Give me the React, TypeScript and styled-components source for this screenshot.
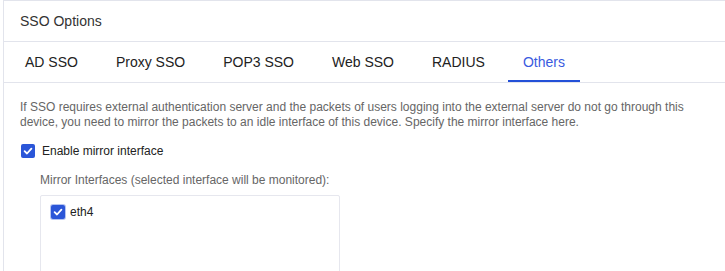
import styled, { createGlobalStyle } from 'styled-components'

const GlobalStyle = createGlobalStyle`
  html, body {
    margin: 0;
    padding: 0;
    background: #fff;
    overflow: hidden;
  }
  body {
    font-family: "Liberation Sans", Arial, sans-serif;
  }
`

const tabs = ['AD SSO', 'Proxy SSO', 'POP3 SSO', 'Web SSO', 'RADIUS', 'Others']

const Check = ({ focused }: { focused?: boolean }) => (
  <Box $focused={focused}>
    <svg width="10" height="10" viewBox="0 0 10 10">
      <path d="M1.6 5.2 L4 7.5 L8.4 2.6" fill="none" stroke="#fff" strokeWidth="1.8" strokeLinecap="round" strokeLinejoin="round" />
    </svg>
  </Box>
)

export default function App() {
  return (
    <>
      <GlobalStyle />
      <Panel>
        <Header>SSO Options</Header>
        <TabBar>
          {tabs.map((t) => (
            <Tab key={t} $active={t === 'Others'}>{t}</Tab>
          ))}
        </TabBar>
        <Content>
          <Description>
            If SSO requires external authentication server and the packets of users logging into the external server do not go through this
            device, you need to mirror the packets to an idle interface of this device. Specify the mirror interface here.
          </Description>
          <CheckRow>
            <Check />
            <CheckLabel>Enable mirror interface</CheckLabel>
          </CheckRow>
          <SubSection>
            <SubLabel>Mirror Interfaces (selected interface will be monitored):</SubLabel>
            <ListBox>
              <ListItem>
                <Check focused />
                <ItemLabel>eth4</ItemLabel>
              </ListItem>
            </ListBox>
          </SubSection>
        </Content>
      </Panel>
    </>
  )
}

const Panel = styled.div`
  margin-left: 3px;
  border: 1px solid #e2e4ec;
  border-right: none;
  border-bottom: none;
  height: 270px;
  overflow: hidden;
`

const Header = styled.div`
  height: 40px;
  display: flex;
  align-items: center;
  padding-left: 16px;
  font-size: 14px;
  color: #333;
  border-bottom: 1px solid #e2e4ec;
`

const TabBar = styled.div`
  display: flex;
  gap: 8px;
  height: 40px;
  padding-left: 6px;
  border-bottom: 1px solid #e2e4ec;
`

const Tab = styled.div<{ $active?: boolean }>`
  display: flex;
  align-items: center;
  padding: 0 15px;
  font-size: 14px;
  color: ${(p) => (p.$active ? '#3a5be0' : '#222')};
  box-shadow: ${(p) => (p.$active ? 'inset 0 -2px 0 #2350d8' : 'none')};
`

const Content = styled.div`
  padding: 17px 16px 0;
`

const Description = styled.p`
  margin: 0;
  font-size: 12px;
  line-height: 15px;
  color: #666;
`

const CheckRow = styled.div`
  display: flex;
  align-items: center;
  gap: 7px;
  margin-top: 13px;
  padding-left: 1px;
  height: 15px;
`

const Box = styled.span<{ $focused?: boolean }>`
  width: 14px;
  height: 14px;
  border-radius: 2px;
  background: #2b56d8;
  display: flex;
  align-items: center;
  justify-content: center;
  flex-shrink: 0;
  box-shadow: ${(p) => (p.$focused ? '0 0 0 1px rgba(43, 86, 216, 0.35)' : 'none')};
`

const CheckLabel = styled.span`
  font-size: 12px;
  color: #222;
`

const SubSection = styled.div`
  padding-left: 20px;
  margin-top: 15px;
`

const SubLabel = styled.div`
  font-size: 12px;
  line-height: 15px;
  color: #666;
`

const ListBox = styled.div`
  margin-top: 7px;
  width: 300px;
  height: 120px;
  border: 1px solid #e6e7ee;
  border-radius: 2px;
  padding: 9px 10px;
  box-sizing: border-box;
`

const ListItem = styled.div`
  display: flex;
  align-items: center;
  gap: 5px;
`

const ItemLabel = styled.span`
  font-size: 12px;
  color: #222;
`
